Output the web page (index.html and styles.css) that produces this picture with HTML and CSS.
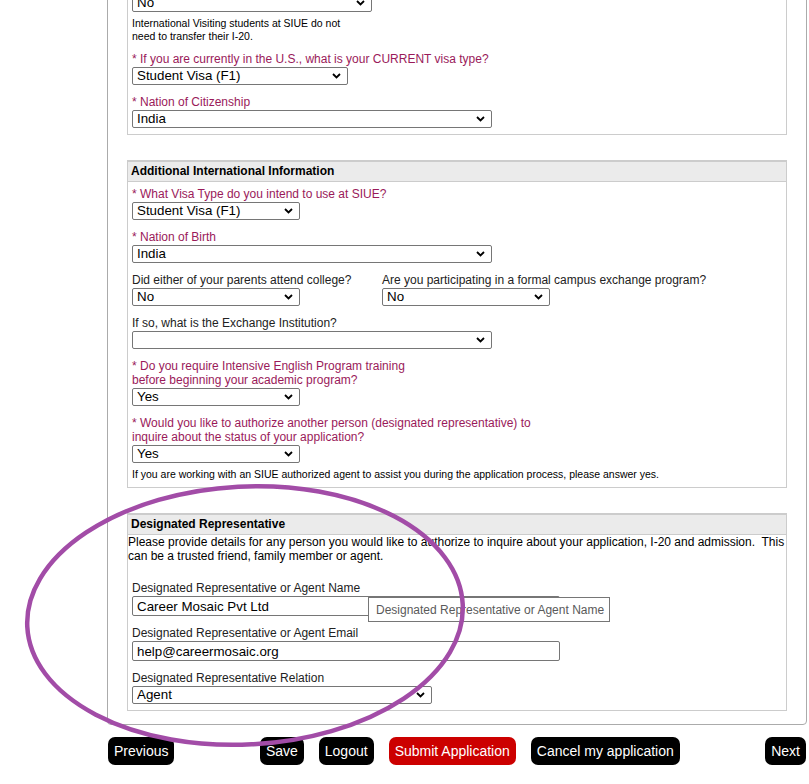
FILE: index.html
```html
<!DOCTYPE html>
<html>
<head>
<meta charset="utf-8">
<title>International Information</title>
<link rel="stylesheet" href="styles.css">
</head>
<body>
<div class="frame">
  <div class="section s1">
    <div class="body">
      <select class="sel w240"><option>No</option></select>
      <p class="note">International Visiting students at SIUE do not<br>need to transfer their I-20.</p>
      <div class="field gap9">
        <label class="lbl req">* If you are currently in the U.S., what is your CURRENT visa type?</label>
        <select class="sel w216"><option>Student Visa (F1)</option></select>
      </div>
      <div class="field">
        <label class="lbl req">* Nation of Citizenship</label>
        <select class="sel w360"><option>India</option></select>
      </div>
    </div>
  </div>

  <div class="section">
    <div class="head">Additional International Information</div>
    <div class="body">
      <div class="field first">
        <label class="lbl req">* What Visa Type do you intend to use at SIUE?</label>
        <select class="sel w168"><option>Student Visa (F1)</option></select>
      </div>
      <div class="field">
        <label class="lbl req">* Nation of Birth</label>
        <select class="sel w360"><option>India</option></select>
      </div>
      <div class="field row">
        <div>
          <label class="lbl">Did either of your parents attend college?</label>
          <select class="sel w168"><option>No</option></select>
        </div>
        <div>
          <label class="lbl">Are you participating in a formal campus exchange program?</label>
          <select class="sel w168"><option>No</option></select>
        </div>
      </div>
      <div class="field">
        <label class="lbl">If so, what is the Exchange Institution?</label>
        <select class="sel w360"><option></option></select>
      </div>
      <div class="field">
        <label class="lbl req">* Do you require Intensive English Program training<br>before beginning your academic program?</label>
        <select class="sel w168"><option>Yes</option></select>
      </div>
      <div class="field">
        <label class="lbl req">* Would you like to authorize another person (designated representative) to<br>inquire about the status of your application?</label>
        <select class="sel w168"><option>Yes</option></select>
      </div>
      <p class="note">If you are working with an SIUE authorized agent to assist you during the application process, please answer yes.</p>
    </div>
  </div>

  <div class="section">
    <div class="head">Designated Representative</div>
    <div class="body">
      <p class="intro">Please provide details for any person you would like to authorize to inquire about your application, I-20 and admission.&nbsp; This<br>can be a trusted friend, family member or agent.</p>
      <div class="field rep tip-host">
        <label class="lbl">Designated Representative or Agent Name</label>
        <input class="inp" type="text" value="Career Mosaic Pvt Ltd">
        <div class="tooltip">Designated Representative or Agent Name</div>
      </div>
      <div class="field">
        <label class="lbl">Designated Representative or Agent Email</label>
        <input class="inp" type="text" value="help@careermosaic.org">
      </div>
      <div class="field">
        <label class="lbl">Designated Representative Relation</label>
        <select class="sel w300"><option>Agent</option></select>
      </div>
    </div>
  </div>
</div>

<div class="buttons">
  <a class="btn">Previous</a>
  <div class="mid">
    <a class="btn">Save</a>
    <a class="btn">Logout</a>
    <a class="btn red">Submit Application</a>
    <a class="btn">Cancel my application</a>
  </div>
  <a class="btn">Next</a>
</div>

<svg class="mark" width="809" height="784" viewBox="0 0 809 784" xmlns="http://www.w3.org/2000/svg">
  <ellipse cx="245" cy="615.5" rx="218" ry="129" transform="rotate(-3 245 615.5)" fill="none" stroke="#a24ca7" stroke-width="4.5"/>
</svg>
</body>
</html>
```

FILE: styles.css
```css
* {
  box-sizing: border-box;
}

html, body {
  margin: 0;
  padding: 0;
  background: #fff;
}

body {
  position: relative;
  width: 809px;
  height: 784px;
  overflow: hidden;
  font-family: "Liberation Sans", Arial, sans-serif;
  font-size: 12px;
  color: #222;
}

.frame {
  margin: -19px 0 0 107px;
  width: 700px;
  border: 1px solid #ababab;
  border-radius: 0 0 4px 4px;
  padding-bottom: 13px;
}

.section {
  margin: 25px 19px 0;
  border: 1px solid #cccccc;
}

.s1 {
  margin-top: 0;
}

.s1 .body {
  padding-top: 11px;
}

.head {
  background: #ebebeb;
  border-top: 1px solid #cccccc;
  border-bottom: 1px solid #cccccc;
  height: 21px;
  line-height: 19px;
  padding-left: 3px;
  font-weight: bold;
  color: #000;
}

.body {
  padding: 5px 4px 6px;
}

.field {
  margin-top: 10px;
}

.field.first {
  margin-top: 0;
}

.field.gap9 {
  margin-top: 9px;
}

.row {
  display: grid;
  grid-template-columns: 250px auto;
}

.lbl {
  display: block;
  line-height: 14px;
  margin-bottom: 1px;
  font-size: 12px;
  color: #222;
}

.lbl.req {
  color: #9a1a5a;
}

.note {
  margin: 5px 0 0;
  font-size: 10.5px;
  line-height: 13px;
  color: #000;
}

.intro {
  margin: -5px -4px 0;
  font-size: 12px;
  line-height: 14px;
  color: #000;
}

.field.rep {
  margin-top: 18px;
}

.sel {
  display: block;
  -webkit-appearance: none;
  appearance: none;
  height: 18px;
  margin: 0;
  padding: 0 18px 0 4px;
  border: 1px solid #767676;
  border-radius: 2px;
  background-color: #fff;
  background-image: url("data:image/svg+xml,%3Csvg xmlns='http://www.w3.org/2000/svg' width='9' height='6' viewBox='0 0 9 6'%3E%3Cpath d='M1 1l3.5 3.5L8 1' fill='none' stroke='%23000' stroke-width='1.8'/%3E%3C/svg%3E");
  background-repeat: no-repeat;
  background-position: right 6px center;
  font-family: "Liberation Sans", Arial, sans-serif;
  font-size: 13.33px;
  line-height: 16px;
  color: #000;
}

.w168 { width: 168px; }
.w216 { width: 216px; }
.w240 { width: 240px; }
.w300 { width: 300px; }
.w360 { width: 360px; }

.inp {
  display: block;
  width: 428px;
  height: 20px;
  margin: 0;
  padding: 0 4px;
  border: 1px solid #767676;
  border-radius: 2px;
  font-family: "Liberation Sans", Arial, sans-serif;
  font-size: 13.33px;
  color: #000;
  background: #fff;
}

.tip-host {
  position: relative;
}

.tooltip {
  position: absolute;
  left: 236px;
  top: 16px;
  width: 242px;
  height: 25px;
  border: 1px solid #767676;
  background: #fff;
  padding: 0 7px;
  font-size: 12px;
  line-height: 24px;
  color: #5a5a5a;
  white-space: nowrap;
}

.buttons {
  display: flex;
  align-items: center;
  margin: 12px 0 0 108px;
  width: 698px;
}

.mid {
  flex: 1;
  display: flex;
  justify-content: center;
  gap: 15px;
}

.btn {
  display: block;
  height: 28px;
  padding: 0 6px;
  border-radius: 7px;
  background: #000;
  color: #fff;
  font-size: 14px;
  line-height: 28px;
  white-space: nowrap;
}

.btn.red {
  background: #cc0000;
}

.mark {
  position: absolute;
  left: 0;
  top: 0;
  pointer-events: none;
}
```
